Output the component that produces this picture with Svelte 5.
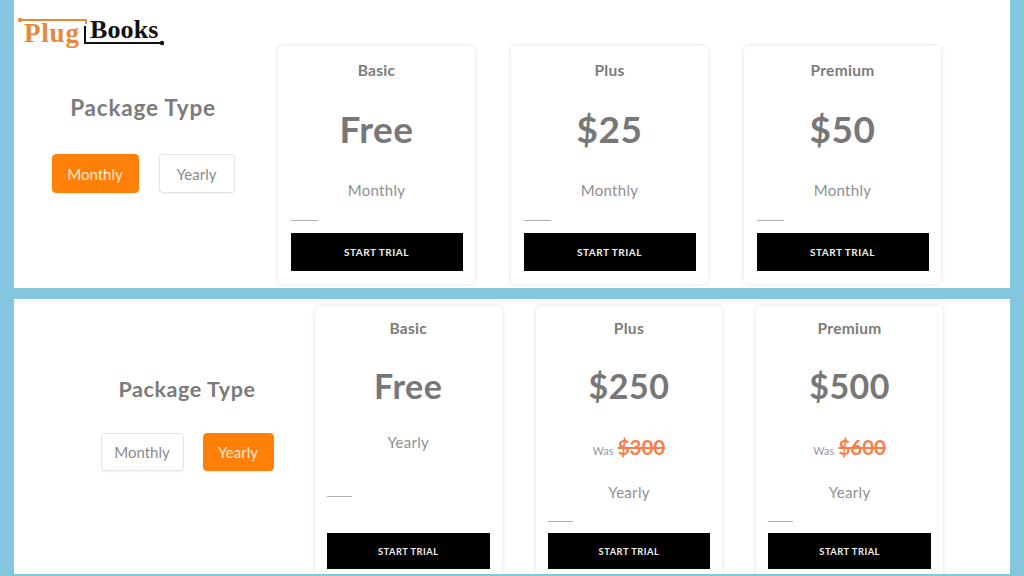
<script>
  const top = [
    { name: 'Basic', price: 'Free' },
    { name: 'Plus', price: '$25' },
    { name: 'Premium', price: '$50' }
  ];
  const bottom = [
    { name: 'Basic', price: 'Free' },
    { name: 'Plus', price: '$250', was: '$300' },
    { name: 'Premium', price: '$500', was: '$600' }
  ];
</script>

<div class="page">
  <section class="panel upper">
    <div class="logo" aria-label="PlugBooks">
      <svg class="logo-lines" width="150" height="34" viewBox="0 0 150 34">
        <path d="M3 2 H69 V6" fill="none" stroke="#e8873a" stroke-width="1.8"/>
        <circle cx="3" cy="2" r="2.2" fill="#e8873a"/>
        <path d="M68 8 V25 H145" fill="none" stroke="#111" stroke-width="2"/>
        <circle cx="145" cy="25" r="2.2" fill="#111"/>
      </svg>
      <span class="plug">Plug</span><span class="books">Books</span>
    </div>
    <div class="side">
      <h2>Package Type</h2>
      <div class="toggle">
        <span class="pill on">Monthly</span>
        <span class="pill">Yearly</span>
      </div>
    </div>
    <div class="cards">
      {#each top as c}
        <article class="card">
          <h3>{c.name}</h3>
          <div class="price">{c.price}</div>
          <div class="period">Monthly</div>
          <div class="rule"></div>
          <div class="cta">START TRIAL</div>
        </article>
      {/each}
    </div>
  </section>

  <section class="panel lower">
    <div class="side">
      <h2>Package Type</h2>
      <div class="toggle">
        <span class="pill">Monthly</span>
        <span class="pill on">Yearly</span>
      </div>
    </div>
    <div class="cards">
      {#each bottom as c}
        <article class="card" class:plain={!c.was}>
          <h3>{c.name}</h3>
          <div class="price">{c.price}</div>
          {#if c.was}
            <div class="was"><small>Was</small> <s>{c.was}</s></div>
          {/if}
          <div class="period">Yearly</div>
          <div class="rule"></div>
          <div class="cta">START TRIAL</div>
        </article>
      {/each}
    </div>
  </section>
</div>

<style>
  :global(body) {
    margin: 0;
    background: #84c6de;
  }
  .page {
    width: 1024px;
    height: 576px;
    box-sizing: border-box;
    padding: 0 14px;
    display: flex;
    flex-direction: column;
    gap: 11px;
    overflow: hidden;
    font-family: Lato, "Open Sans", sans-serif;
    color: #777;
  }
  .panel {
    background: #fff;
    display: flex;
    position: relative;
    flex: none;
    overflow: hidden;
  }
  .upper { height: 288px; }
  .lower { height: 275px; }
  .logo {
    position: absolute;
    left: 3px;
    top: 18px;
    width: 150px;
    height: 34px;
    font-family: "Liberation Serif", serif;
    font-weight: 700;
  }
  .logo-lines { position: absolute; left: 0; top: 0; }
  .plug {
    position: absolute;
    left: 7px;
    top: 1px;
    font-size: 27px;
    line-height: 28px;
    color: #e8873a;
    letter-spacing: 0.8px;
  }
  .books {
    position: absolute;
    left: 73px;
    top: -2px;
    font-size: 26px;
    line-height: 28px;
    color: #111;
    letter-spacing: 0.1px;
  }
  .side {
    flex: none;
    display: flex;
    flex-direction: column;
    align-items: center;
  }
  .upper .side { width: 264px; padding: 94px 6px 0 0; box-sizing: border-box; }
  .lower .side { width: 301px; padding: 76px 0 0 45px; box-sizing: border-box; }
  h2 {
    margin: 0;
    font-weight: 700;
    color: #7b7b7b;
    white-space: nowrap;
  }
  .upper h2 { font-size: 22.500px; line-height: 28px; letter-spacing: 0.8px; }
  .lower h2 { font-size: 21.500px; line-height: 28px; letter-spacing: 0.6px; }
  .toggle { display: flex; }
  .upper .toggle { gap: 20px; margin-top: 32px; }
  .lower .toggle { gap: 19px; margin-top: 30px; }
  .pill {
    box-sizing: border-box;
    display: flex;
    align-items: center;
    justify-content: center;
    height: 39px;
    border: 1px solid #e4e4e4;
    border-radius: 4px;
    font-size: 15px;
    color: #8a8a8a;
    box-shadow: 0 1px 2px rgba(0, 0, 0, 0.06);
    width: 76px;
  }
  .upper .on { width: 87px; }
  .lower .pill { height: 38px; width: 83px; }
  .lower .on { width: 71px; }
  .on {
    background: #ff8008;
    border-color: #ff8008;
    color: #ffe9d2;
  }
  .cards { display: flex; }
  .upper .cards { gap: 36px; padding-top: 46px; }
  .lower .cards { gap: 34.200px; padding-top: 7px; }
  .card {
    box-sizing: border-box;
    border-radius: 5px;
    box-shadow: 0 0 5px rgba(0, 0, 0, 0.13);
    text-align: center;
    display: flex;
    flex-direction: column;
  }
  .upper .card { width: 197px; height: 238px; padding: 15px 12.500px 0; }
  .lower .card { width: 186.500px; height: 290px; padding: 13px 12px 0; }
  h3 {
    margin: 0;
    font-size: 15.500px;
    line-height: 18px;
    font-weight: 700;
    color: #7a7a7a;
    letter-spacing: 0.3px;
  }
  .price {
    font-weight: 700;
    color: #777;
    letter-spacing: 0.5px;
  }
  .upper .price { font-size: 37px; line-height: 44px; margin-top: 28px; }
  .lower .price { font-size: 34px; line-height: 40px; margin-top: 29px; }
  .period {
    font-size: 15px;
    line-height: 20px;
    color: #8f8f8f;
    letter-spacing: 0.3px;
  }
  .upper .period { margin-top: 29px; }
  .lower .plain .period { margin-top: 26px; }
  .was {
    margin-top: 30px;
    height: 22px;
    line-height: 22px;
    color: #ff7d45;
  }
  .was small {
    font-size: 11px;
    color: #999;
  }
  .was s {
    font-size: 20.500px;
    font-weight: 700;
    color: #f77f4a;
  }
  .lower .was + .period { margin-top: 24px; }
  .rule {
    height: 1px;
    background: #b0b0b0;
  }
  .upper .rule { width: 27px; margin-top: 20px; }
  .lower .rule { width: 25px; margin-top: 19px; }
  .lower .plain .rule { margin-top: 44px; }
  .cta {
    background: #000;
    color: #f0f0f0;
    font-weight: 700;
    letter-spacing: 0.5px;
    display: flex;
    align-items: center;
    justify-content: center;
  }
  .upper .cta { font-size: 10px; height: 38px; margin-top: 12px; }
  .lower .cta { font-size: 9.300px; height: 36px; margin-top: 11px; }
  .lower .plain .cta { margin-top: 36px; }
</style>
